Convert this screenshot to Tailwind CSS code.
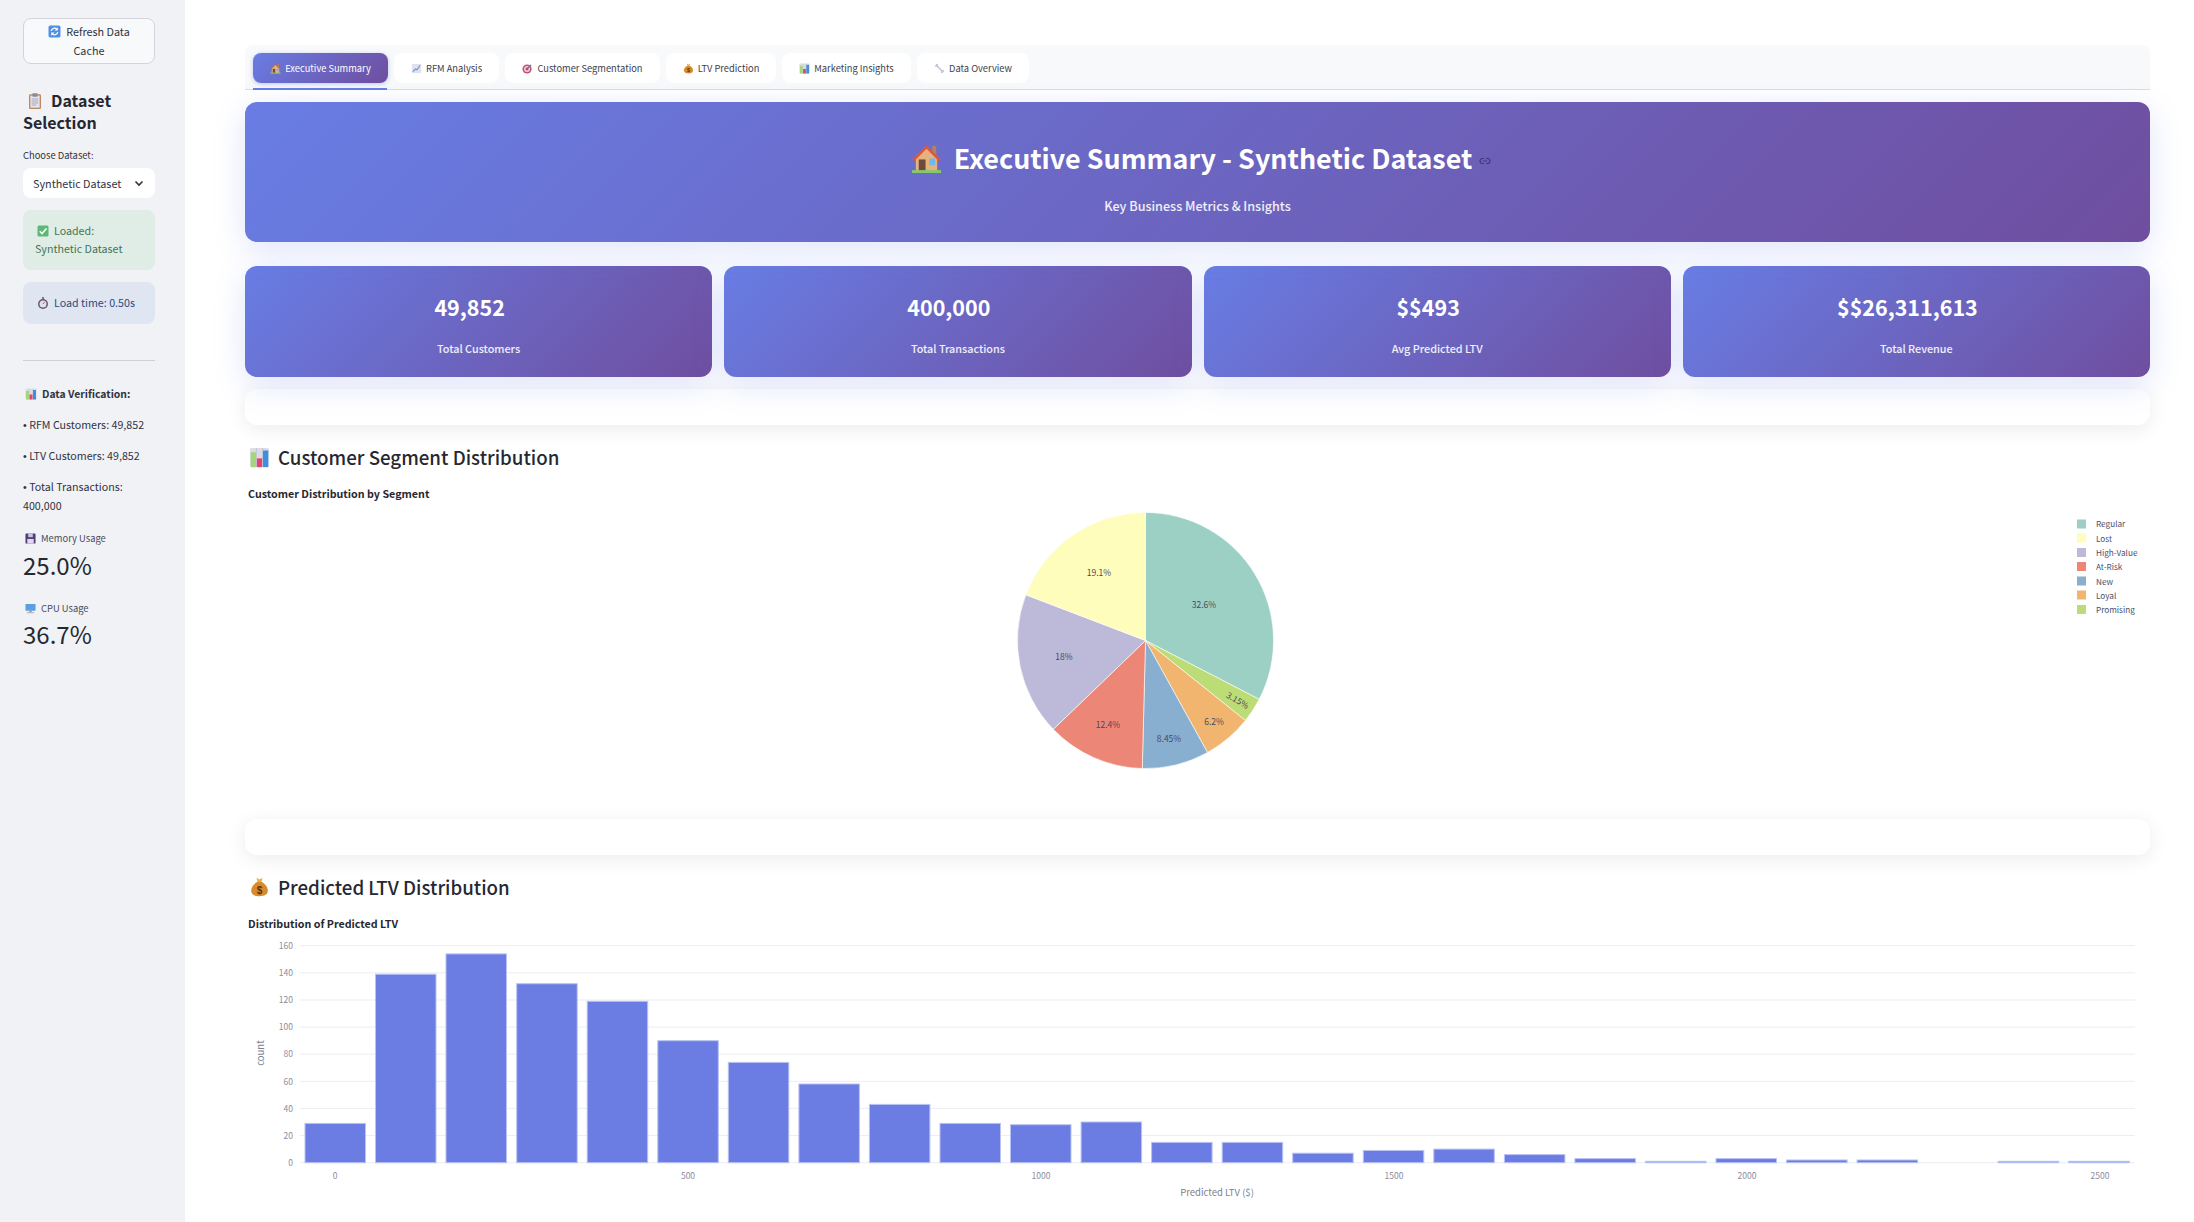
<!DOCTYPE html>
<html>
  <head>
    <meta charset="utf-8">
    <title>Executive Summary</title>
    <script src="https://cdn.jsdelivr.net/npm/@tailwindcss/browser@4"></script>
  </head>
  <body class="bg-white">
    <svg class="hidden" xmlns="http://www.w3.org/2000/svg">
      <symbol id="e-refresh" viewBox="0 0 24 24">
        <rect x="1" y="1" width="22" height="22" rx="3" fill="#4f8fe6"/>
        <path d="M6 11a6 6 0 0 1 10.5-3M18 13a6 6 0 0 1-10.5 3" fill="none" stroke="#fff" stroke-width="2.4"/>
        <path d="M18 4v6h-6zM6 20v-6h6z" fill="#fff"/>
      </symbol>
      <symbol id="e-clipboard" viewBox="0 0 24 24">
        <rect x="3" y="2" width="18" height="22" rx="2" fill="#b98a5e"/>
        <rect x="5" y="4" width="14" height="18" fill="#e8e4ee"/>
        <rect x="8" y="0.5" width="8" height="5" rx="1" fill="#8b8b96"/>
        <path d="M7 9h10M7 12h10M7 15h10M7 18h7" stroke="#9a98a8" stroke-width="1.2"/>
      </symbol>
      <symbol id="e-check" viewBox="0 0 24 24">
        <rect x="1" y="1" width="22" height="22" rx="3" fill="#5cb877"/>
        <path d="M5.5 12.5l4.5 4.5 9-10" fill="none" stroke="#fff" stroke-width="3.2"/>
      </symbol>
      <symbol id="e-watch" viewBox="0 0 24 24">
        <rect x="10" y="0.5" width="4" height="3" fill="#55556a"/>
        <circle cx="12" cy="14" r="10" fill="#5a5a70"/>
        <circle cx="12" cy="14" r="7" fill="#e4dfe6"/>
        <path d="M12 14l3-4" stroke="#d0455a" stroke-width="1.8"/>
      </symbol>
      <symbol id="e-bars" viewBox="0 0 24 24">
        <rect x="1" y="1" width="22" height="22" rx="2" fill="#dcdce6"/>
        <path d="M8.5 1v22M15.5 1v22" stroke="#c2c2d0"/>
        <rect x="2" y="6" width="6" height="17" fill="#a4d67a"/>
        <rect x="9" y="13" width="6" height="10" fill="#e0446f"/>
        <rect x="16" y="4" width="6" height="19" fill="#3f8fdc"/>
      </symbol>
      <symbol id="e-floppy" viewBox="0 0 24 24">
        <rect x="1" y="1" width="22" height="22" rx="2" fill="#4f3f78"/>
        <rect x="5" y="13" width="14" height="10" fill="#e3d6ee"/>
        <rect x="7" y="1" width="10" height="8" fill="#cfc3de"/>
      </symbol>
      <symbol id="e-monitor" viewBox="0 0 24 24">
        <rect x="1" y="2" width="22" height="15" rx="1" fill="#5b9fe0"/>
        <rect x="9" y="17" width="6" height="3" fill="#9a9aa6"/>
        <rect x="4" y="20" width="16" height="2.5" fill="#b5b5c0"/>
      </symbol>
      <symbol id="e-house" viewBox="0 0 32 32">
        <rect x="22" y="3" width="4" height="10" fill="#b5815a"/>
        <path d="M5 14L16 4l11 10v15H5z" fill="#e3b27f"/>
        <path d="M1 17L16 2l15 15-2 2L16 6 3 19z" fill="#d8593f"/>
        <rect x="8" y="17" width="7" height="12" fill="#6e4a3c"/>
        <rect x="19" y="16" width="6" height="7" fill="#6fb9e8"/>
        <rect x="1" y="28" width="30" height="3" fill="#86c96a"/>
      </symbol>
      <symbol id="e-chart" viewBox="0 0 24 24">
        <rect x="2" y="2" width="20" height="20" fill="#dfe2ee"/>
        <path d="M4 19l6-6 3 2 7-10" fill="none" stroke="#5b8fd8" stroke-width="2.2"/>
      </symbol>
      <symbol id="e-target" viewBox="0 0 24 24">
        <circle cx="11" cy="13" r="10" fill="#c9506f"/>
        <circle cx="11" cy="13" r="6.5" fill="#e8dbe4"/>
        <circle cx="11" cy="13" r="3.5" fill="#c9506f"/>
        <path d="M11 13L20 4" stroke="#5a6a98" stroke-width="2.4"/>
      </symbol>
      <symbol id="e-bag" viewBox="0 0 24 24">
        <path d="M8.5 1l3.5 2 3.5-2-1 5h-5z" fill="#e8b04a"/>
        <path d="M9 6h6c4 2.500 7 6 7 10.500 0 4.500-4 6.500-10 6.500S2 21 2 16.500C2 12 5 8.500 9 6z" fill="#d98a2b"/>
        <text x="12" y="20" text-anchor="middle" font-size="12" font-weight="700" font-family="Liberation Sans" fill="#5b3512">$</text>
      </symbol>
      <symbol id="e-bone" viewBox="0 0 24 24">
        <path d="M6 6l12 12" stroke="#c6c2d6" stroke-width="3.6"/>
        <circle cx="4.500" cy="6.500" r="2.400" fill="#c6c2d6"/>
        <circle cx="6.500" cy="4" r="2.400" fill="#c6c2d6"/>
        <circle cx="17.500" cy="20" r="2.400" fill="#c6c2d6"/>
        <circle cx="20" cy="17.500" r="2.400" fill="#c6c2d6"/>
      </symbol>
    </svg>

    <div class="flex h-[1222px] overflow-hidden text-[#31333f] font-['Noto_Sans_CJK_SC','Source_Sans_Pro',sans-serif]">
      <!-- sidebar -->
      <aside class="w-[185px] shrink-0 bg-[#f0f2f6] pl-[23px] pr-[30px] pt-[18px]">
        <button class="flex h-[46px] w-full flex-col items-center justify-center rounded-lg border-[1.5px] border-[#d4d4da] bg-[#f8f9fb] pb-[1px] text-[10.8px] leading-[19px]">
          <span class="flex items-center"><svg class="mr-[5px] h-[13px] w-[13px]"><use href="#e-refresh"/></svg>Refresh Data</span>
          <span>Cache</span>
        </button>

        <h2 class="mt-[25px] text-[16px] font-bold leading-[22px] text-[#262730]">
          <svg class="ml-[4px] mr-[8px] inline h-[18px] w-[16px] align-[-3px]"><use href="#e-clipboard"/></svg>Dataset Selection
        </h2>
        <div class="mt-[15px] text-[9.4px] leading-[14px]">Choose Dataset:</div>
        <div class="mt-[6px] flex h-[30px] items-center justify-between rounded-lg bg-white pl-[10px] pr-[11px] text-[10.8px]">
          <span>Synthetic Dataset</span>
          <svg class="h-[10px] w-[10px]" viewBox="0 0 10 10"><path d="M1.5 3.500L5 7l3.500-3.500" fill="none" stroke="#31333f" stroke-width="1.6"/></svg>
        </div>
        <div class="mt-[12px] h-[60px] rounded-lg bg-[#dfede6] px-[12px] pt-[12px] text-[10.7px] leading-[18px] text-[#3f7556]">
          <svg class="ml-[2px] mr-[5px] inline h-[12px] w-[12px] align-[-2px]"><use href="#e-check"/></svg>Loaded:<br>Synthetic Dataset
        </div>
        <div class="mt-[12px] flex h-[42px] items-center rounded-lg bg-[#dfe6f2] px-[14px] text-[10.7px] text-[#2a4a80]">
          <svg class="mr-[5px] h-[12px] w-[12px]"><use href="#e-watch"/></svg>Load time: 0.50s
        </div>
        <hr class="mt-[36px] border-[#cfd0d6]">

        <div class="mt-[24px] flex items-center text-[10.4px] font-bold leading-[18px]">
          <svg class="ml-[2px] mr-[5px] h-[12px] w-[12px]"><use href="#e-bars"/></svg>Data Verification:
        </div>
        <div class="mt-[12px] text-[10.7px] leading-[19px]"><span class="font-['Liberation_Sans'] leading-[0]">•</span> RFM Customers: 49,852</div>
        <div class="mt-[12px] text-[10.7px] leading-[19px]"><span class="font-['Liberation_Sans'] leading-[0]">•</span> LTV Customers: 49,852</div>
        <div class="mt-[12px] text-[10.7px] leading-[19px]"><span class="font-['Liberation_Sans'] leading-[0]">•</span> Total Transactions: 400,000</div>

        <div class="mt-[16px] flex items-center text-[9.4px] leading-[14px] text-[#4a4c5c]">
          <svg class="ml-[2px] mr-[5px] h-[11px] w-[11px]"><use href="#e-floppy"/></svg>Memory Usage
        </div>
        <div class="mt-[3px] text-[24px] leading-[34px] text-[#262730]">25.0%</div>
        <div class="mt-[19px] flex items-center text-[9.4px] leading-[14px] text-[#4a4c5c]">
          <svg class="ml-[2px] mr-[5px] h-[11px] w-[11px]"><use href="#e-monitor"/></svg>CPU Usage
        </div>
        <div class="mt-[2px] text-[24px] leading-[34px] text-[#262730]">36.7%</div>
      </aside>

      <!-- main -->
      <main class="min-w-0 flex-1 pl-[60px] pr-[44px] pt-[45px]">
        <div class="flex h-[45px] gap-[6px] rounded-t-lg border-b border-[#dcdce2] bg-[#f8f9fa] pl-[8px] pt-[8px] text-[9.3px] leading-[30px] text-[#3c3e4c]">
          <div class="relative flex h-[30px] w-[135px] items-center justify-center rounded-lg bg-[linear-gradient(135deg,#687de4_0%,#6f4e9f_100%)] text-white shadow-[0_1px_4px_rgba(102,126,234,0.4)]">
            <svg class="mr-[4px] h-[11px] w-[11px]"><use href="#e-house"/></svg>Executive Summary
            <span class="absolute -bottom-[7px] left-0 h-[2px] w-[134px] bg-[#667eea]"></span>
          </div>
          <div class="flex h-[30px] w-[105px] items-center justify-center rounded-lg bg-white"><svg class="mr-[4px] h-[11px] w-[11px]"><use href="#e-chart"/></svg>RFM Analysis</div>
          <div class="flex h-[30px] w-[155px] items-center justify-center rounded-lg bg-white"><svg class="mr-[4px] h-[11px] w-[11px]"><use href="#e-target"/></svg>Customer Segmentation</div>
          <div class="flex h-[30px] w-[110px] items-center justify-center rounded-lg bg-white"><svg class="mr-[4px] h-[11px] w-[11px]"><use href="#e-bag"/></svg>LTV Prediction</div>
          <div class="flex h-[30px] w-[129px] items-center justify-center rounded-lg bg-white"><svg class="mr-[4px] h-[11px] w-[11px]"><use href="#e-bars"/></svg>Marketing Insights</div>
          <div class="flex h-[30px] w-[112px] items-center justify-center rounded-lg bg-white"><svg class="mr-[4px] h-[11px] w-[11px]"><use href="#e-bone"/></svg>Data Overview</div>
        </div>

        <div class="relative mt-[12px] flex h-[140px] flex-col items-center rounded-xl bg-[linear-gradient(135deg,#687de4_0%,#6f4e9f_100%)] text-white shadow-[0_8px_32px_rgba(102,126,234,0.2)]">
          <h1 class="mt-[34px] flex h-[44px] items-center pl-[8px] text-[26.9px] font-bold leading-[44px]">
            <svg class="mr-[12px] h-[31px] w-[31px]"><use href="#e-house"/></svg>Executive Summary - Synthetic Dataset
            <svg class="ml-[6px] mt-[6px] h-[12px] w-[14px]" viewBox="0 0 24 24"><path d="M10 7H7a5 5 0 0 0 0 10h3M14 7h3a5 5 0 0 1 0 10h-3M8 12h8" fill="none" stroke="#3f3c78" stroke-width="2.400"/></svg>
          </h1>
          <p class="mt-[16px] text-[12.6px] font-medium leading-[20px] text-white/90">Key Business Metrics &amp; Insights</p>
        </div>

        <div class="mt-[24px] grid h-[111px] grid-cols-4 gap-[12px]">
          <div class="flex flex-col items-center rounded-xl bg-[linear-gradient(135deg,#687de4_0%,#6f4e9f_100%)] pt-[25px] text-white shadow-[0_8px_32px_rgba(102,126,234,0.2)]">
            <div class="-ml-[18px] text-[21.5px] font-bold leading-[32px]">49,852</div>
            <div class="mt-[16px] text-[10.8px] font-medium leading-[18px] text-white/90">Total Customers</div>
          </div>
          <div class="flex flex-col items-center rounded-xl bg-[linear-gradient(135deg,#687de4_0%,#6f4e9f_100%)] pt-[25px] text-white shadow-[0_8px_32px_rgba(102,126,234,0.2)]">
            <div class="-ml-[18px] text-[21.5px] font-bold leading-[32px]">400,000</div>
            <div class="mt-[16px] text-[10.8px] font-medium leading-[18px] text-white/90">Total Transactions</div>
          </div>
          <div class="flex flex-col items-center rounded-xl bg-[linear-gradient(135deg,#687de4_0%,#6f4e9f_100%)] pt-[25px] text-white shadow-[0_8px_32px_rgba(102,126,234,0.2)]">
            <div class="-ml-[18px] text-[21.5px] font-bold leading-[32px]">$$493</div>
            <div class="mt-[16px] text-[10.8px] font-medium leading-[18px] text-white/90">Avg Predicted LTV</div>
          </div>
          <div class="flex flex-col items-center rounded-xl bg-[linear-gradient(135deg,#687de4_0%,#6f4e9f_100%)] pt-[25px] text-white shadow-[0_8px_32px_rgba(102,126,234,0.2)]">
            <div class="-ml-[18px] text-[21.5px] font-bold leading-[32px]">$$26,311,613</div>
            <div class="mt-[16px] text-[10.8px] font-medium leading-[18px] text-white/90">Total Revenue</div>
          </div>
        </div>

        <div class="mt-[12px] h-[36px] rounded-xl bg-white shadow-[0_4px_20px_rgba(0,0,0,0.08)]"></div>

        <h3 class="mt-[17px] flex h-[30px] items-center pl-[4px] text-[18.7px] font-medium leading-[30px] text-[#262730]">
          <svg class="mr-[8px] h-[21px] w-[21px]"><use href="#e-bars"/></svg>Customer Segment Distribution
        </h3>
        <div class="mt-[13px] pl-[3px] text-[10.7px] font-bold leading-[18px] text-[#262730]">Customer Distribution by Segment</div>

        <!-- pie: same pixel units as the page, origin at main's content box -->
        <svg class="block" width="1905" height="314" viewBox="245 503 1905 314" font-family="'Noto Sans CJK SC',sans-serif">
          <g transform="translate(1145.500 640.500) scale(1.008)" stroke="#fff" stroke-width="0.6">
            <path d="M0 0L0-127A127 127 0 0 1 112.800 58.400Z" fill="#9dd0c4"/>
            <path d="M0 0L112.800 58.400A127 127 0 0 1 99.100 79.400Z" fill="#bcdd76"/>
            <path d="M0 0L99.100 79.400A127 127 0 0 1 61.500 111.100Z" fill="#f2b56f"/>
            <path d="M0 0L61.500 111.100A127 127 0 0 1-3.200 127Z" fill="#88aed0"/>
            <path d="M0 0L-3.200 127A127 127 0 0 1-91.500 88.100Z" fill="#ec8778"/>
            <path d="M0 0L-91.500 88.100A127 127 0 0 1-118.700-45.300Z" fill="#bdb9d8"/>
            <path d="M0 0L-118.700-45.300A127 127 0 0 1 0-127Z" fill="#fefdbb"/>
          </g>
          <g font-size="8.500" fill="#4a4a58" text-anchor="middle">
            <text x="1204" y="608">32.6%</text>
            <text x="1099" y="576">19.1%</text>
            <text x="1064" y="660">18%</text>
            <text x="1108" y="728">12.4%</text>
            <text x="1169" y="742">8.45%</text>
            <text x="1214" y="725">6.2%</text>
            <text transform="translate(1236 703) rotate(30)">3.15%</text>
          </g>
          <g>
            <rect x="2077" y="519.500" width="9" height="9" fill="#9dd0c4"/>
            <rect x="2077" y="533.500" width="9" height="9" fill="#fefdbb"/>
            <rect x="2077" y="548" width="9" height="9" fill="#bdb9d8"/>
            <rect x="2077" y="562" width="9" height="9" fill="#ec8778"/>
            <rect x="2077" y="576.500" width="9" height="9" fill="#88aed0"/>
            <rect x="2077" y="590.500" width="9" height="9" fill="#f2b56f"/>
            <rect x="2077" y="605" width="9" height="9" fill="#bcdd76"/>
          </g>
          <g font-size="8.200" fill="#4a4f6a">
            <text x="2096" y="527">Regular</text>
            <text x="2096" y="541.500">Lost</text>
            <text x="2096" y="556">High-Value</text>
            <text x="2096" y="570">At-Risk</text>
            <text x="2096" y="584.500">New</text>
            <text x="2096" y="599">Loyal</text>
            <text x="2096" y="613">Promising</text>
          </g>
        </svg>

        <div class="mt-[2px] h-[36px] rounded-xl bg-white shadow-[0_4px_20px_rgba(0,0,0,0.08)]"></div>

        <h3 class="mt-[17px] flex h-[30px] items-center pl-[4px] text-[18.7px] font-medium leading-[30px] text-[#262730]">
          <svg class="mr-[8px] h-[20px] w-[21px]"><use href="#e-bag"/></svg>Predicted LTV Distribution
        </h3>
        <div class="mt-[13px] pl-[3px] text-[10.7px] font-bold leading-[18px] text-[#262730]">Distribution of Predicted LTV</div>

        <svg class="block" width="1905" height="270" viewBox="245 933 1905 270" font-family="'Noto Sans CJK SC',sans-serif">
          <g stroke="#ecedf3" stroke-width="1">
            <path d="M300 945.700H2135M300 972.800H2135M300 1000H2135M300 1027.100H2135M300 1054.200H2135M300 1081.300H2135M300 1108.400H2135M300 1135.600H2135M300 1162.700H2135"/>
          </g>
          <g fill="#6b7de3" stroke="#b8c2f3" stroke-width="1">
            <rect x="305" y="1123.400" width="60.500" height="39.300"/>
            <rect x="375.500" y="974.200" width="60.500" height="188.500"/>
            <rect x="446" y="953.900" width="60.500" height="208.800"/>
            <rect x="516.700" y="983.700" width="60.500" height="179"/>
            <rect x="587.200" y="1001.300" width="60.500" height="161.400"/>
            <rect x="657.800" y="1040.700" width="60.500" height="122"/>
            <rect x="728.300" y="1062.400" width="60.500" height="100.300"/>
            <rect x="798.900" y="1084" width="60.500" height="78.700"/>
            <rect x="869.400" y="1104.400" width="60.500" height="58.300"/>
            <rect x="940" y="1123.400" width="60.500" height="39.300"/>
            <rect x="1010.500" y="1124.700" width="60.500" height="38"/>
            <rect x="1081.100" y="1122" width="60.500" height="40.700"/>
            <rect x="1151.600" y="1142.400" width="60.500" height="20.300"/>
            <rect x="1222.200" y="1142.400" width="60.500" height="20.300"/>
            <rect x="1292.700" y="1153.200" width="60.500" height="9.500"/>
            <rect x="1363.300" y="1150.500" width="60.500" height="12.200"/>
            <rect x="1433.800" y="1149.100" width="60.500" height="13.600"/>
            <rect x="1504.400" y="1154.600" width="60.500" height="8.100"/>
            <rect x="1574.900" y="1158.600" width="60.500" height="4.100"/>
            <rect x="1645.500" y="1161.300" width="60.500" height="1.400"/>
            <rect x="1716" y="1158.600" width="60.500" height="4.100"/>
            <rect x="1786.600" y="1160" width="60.500" height="2.700"/>
            <rect x="1857.100" y="1160" width="60.500" height="2.700"/>
            <rect x="1998.200" y="1161.300" width="60.500" height="1.400"/>
            <rect x="2068.800" y="1161.300" width="60.500" height="1.400"/>
          </g>
          <g font-size="8.500" fill="#8b8d9e" text-anchor="end">
            <text x="293" y="949">160</text>
            <text x="293" y="976">140</text>
            <text x="293" y="1003">120</text>
            <text x="293" y="1030">100</text>
            <text x="293" y="1057">80</text>
            <text x="293" y="1085">60</text>
            <text x="293" y="1112">40</text>
            <text x="293" y="1139">20</text>
            <text x="293" y="1166">0</text>
          </g>
          <g font-size="8.500" fill="#8b8d9e" text-anchor="middle">
            <text x="335" y="1179">0</text>
            <text x="688" y="1179">500</text>
            <text x="1041" y="1179">1000</text>
            <text x="1394" y="1179">1500</text>
            <text x="1747" y="1179">2000</text>
            <text x="2100" y="1179">2500</text>
          </g>
          <text x="1217" y="1196" font-size="9.500" fill="#7d7f90" text-anchor="middle">Predicted LTV ($)</text>
          <text transform="translate(264 1053) rotate(-90)" font-size="9.500" fill="#7d7f90" text-anchor="middle">count</text>
        </svg>
      </main>
    </div>
  </body>
</html>
